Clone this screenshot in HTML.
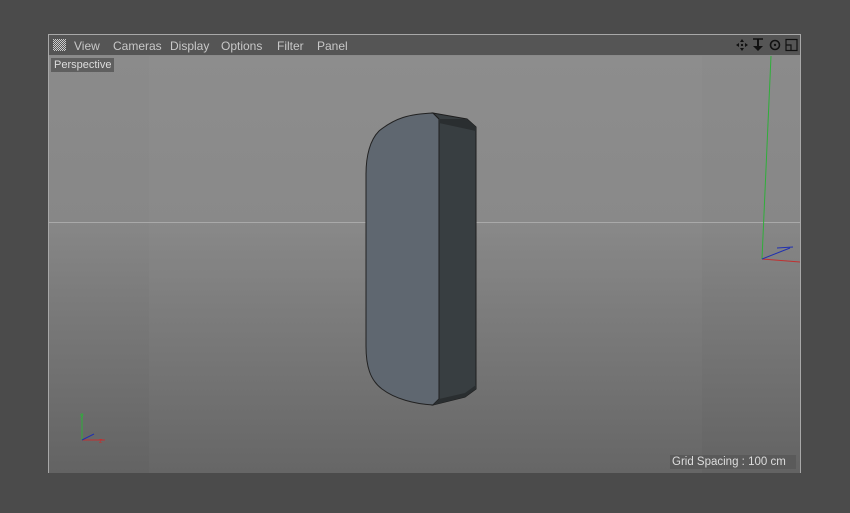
<!DOCTYPE html>
<html><head><style>
body{margin:0;width:850px;height:513px;background:#4b4b4b;position:relative;overflow:hidden;font-family:"Liberation Sans",sans-serif}
#frame{position:absolute;left:48px;top:34px;width:751px;height:437px;border:1px solid #a8a8a8;background:#555}
#menu{position:absolute;left:0;top:0;width:751px;height:20px;background:#555;color:#c8c8c8;font-size:12px}
#menu span{position:absolute;top:4px}
#vp{position:absolute;left:0;top:20px;width:751px;height:417px;border-top:1px solid #8a8a8a;background:linear-gradient(#8b8b8b,#878787 40%,#7a7a7a 60%,#636363)}
.lbl{position:absolute;background:#5f5f5f;color:#ddd;font-size:11px;padding:1px 3px}
</style></head><body>
<div id="frame">
<div id="menu">
<svg style="position:absolute;left:4px;top:4px" width="13" height="12"><pattern id="p" width="2" height="2" patternUnits="userSpaceOnUse"><rect width="1" height="1" fill="#ccc"/><rect x="1" y="1" width="1" height="1" fill="#ccc"/></pattern><rect width="13" height="12" fill="url(#p)"/></svg>
<span style="left:25px">View</span><span style="left:64px">Cameras</span><span style="left:121px">Display</span><span style="left:172px">Options</span><span style="left:228px">Filter</span><span style="left:268px">Panel</span>
<svg style="position:absolute;left:686px;top:2px" width="64" height="16" fill="#111" stroke="#111">
<path d="M7 2l-2 3h4zM7 14l-2-3h4zM1 8l3-2v4zM13 8l-3-2v4z" stroke="none"/><rect x="6" y="7" width="2" height="2" stroke="none"/>
<path d="M23 2v9" stroke-width="2"/><path d="M18 9h10l-5 5z" stroke="none"/><path d="M18 2h10" stroke-width="1.5"/>
<circle cx="40" cy="8" r="4.5" fill="none" stroke-width="1.6"/><circle cx="40" cy="8" r="1.2" stroke="none"/>
<rect x="51" y="2.5" width="11" height="11" fill="none" stroke-width="1.2"/><path d="M51 8h5v5" fill="none" stroke-width="1.2"/>
</svg>
</div>
<div id="vp">
<div style="position:absolute;left:100px;top:0;width:553px;height:417px;background:rgba(255,255,255,0.025)"></div>
<div style="position:absolute;left:0;top:166px;width:751px;height:1px;background:#a9a9a9"></div>
<div class="lbl" style="left:2px;top:2px">Perspective</div>
<svg style="position:absolute;left:0;top:0" width="751" height="417">
<path d="M384 57 C360 58 346 62 330 75 C321 84 317 100 317 118 L317 290 C317 310 321 324 333 333 C346 343 366 348 384 349 L390 343 L390 63 Z" fill="#5f6770" stroke="#222" stroke-width="1"/>
<path d="M384 57 L390 63 L390 343 L384 349 L416 341 L427 333 L427 71 L418 63 Z" fill="#383e41" stroke="#1e1e1e" stroke-width="1"/>
<path d="M390 63 L418 63 L427 71 L427 75 L390 67Z" fill="#2a2e30"/>
<path d="M390 343 L416 337 L427 329 L427 333 L416 341 L384 349Z" fill="#2a2e30"/>
<path d="M722 0 L713 203" stroke="#2fae3a" stroke-width="1"/>
<path d="M713 203 L751 206" stroke="#c03030" stroke-width="1"/>
<path d="M713 203 L741 192 M728 192 L744 191" stroke="#2030b0" stroke-width="1"/>
<path d="M33 357 L33 384" stroke="#2fae3a"/><path d="M33 384 L56 384" stroke="#c03030"/><path d="M33 384 L45 378" stroke="#2030b0"/>
<text x="31" y="362" font-size="7" fill="#2fae3a" font-family="Liberation Sans">y</text>
<text x="50" y="387" font-size="7" fill="#c03030" font-family="Liberation Sans">z</text>
</svg>
<div class="lbl" style="left:621px;top:399px;width:122px;padding:1px 2px;font-size:11.5px;background:#5a5a5a">Grid Spacing : 100 cm</div>
</div>
</div>
</body></html>
